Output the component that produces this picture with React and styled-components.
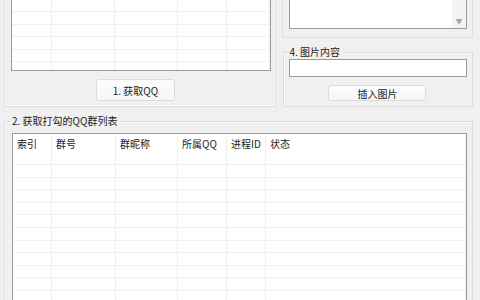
import React from "react";
import styled, { createGlobalStyle } from "styled-components";

const Global = createGlobalStyle`
  html, body { margin: 0; padding: 0; background: #f0f0f0; }
  body {
    font-family: "Noto Sans CJK SC", "Liberation Sans", sans-serif;
    font-size: 10px;
    color: #1a1a1a;
  }
  * { box-sizing: border-box; }
`;

const Window = styled.div`
  width: 480px;
  height: 300px;
  overflow: hidden;
  padding: 0 7px 0 4px;
  display: flex;
  flex-direction: column;
`;

const TopRow = styled.div`
  display: flex;
  gap: 6px;
  height: 107px;
  flex: none;
`;

const LeftGroup = styled.div`
  width: 273px;
  border: 1px solid #dedede;
  border-top: none;
  box-shadow: inset 1px 0 0 #fafafa, inset -1px -1px 0 #fafafa;
  padding: 0 4px 0 6px;
  display: flex;
  flex-direction: column;
`;

const ListBox = styled.div`
  background: #fff;
  border: 1px solid #9a9a9a;
  border-top: ${(p) => (p.$noTop ? "none" : "1px solid #9a9a9a")};
  box-shadow: inset -1px 0 0 #e6e6e6;
  height: ${(p) => p.$h};
  overflow: hidden;
  flex: none;
`;

const GridRow = styled.div`
  display: grid;
  grid-template-columns: ${(p) => p.$cols};
  height: ${(p) => p.$h};
  border-bottom: 1px solid #f1f1f1;
`;

const Cell = styled.div`
  border-right: 1px solid #efefef;
  padding: ${(p) => (p.$head ? "3px 0 0 4px" : "0")};
  white-space: nowrap;
  line-height: 14px;
  color: #222;
`;

const Button = styled.button`
  font-family: "Noto Sans CJK SC", "Liberation Sans", sans-serif;
  font-size: 10px;
  color: #1a1a1a;
  width: ${(p) => p.$w};
  height: ${(p) => p.$h};
  margin-top: ${(p) => p.$mt};
  margin-left: ${(p) => p.$ml};
  align-self: flex-start;
  background: linear-gradient(#fdfdfd, #f6f6f6);
  border: 1px solid #dcdcdc;
  border-radius: 3px;
  padding: 0;
  flex: none;
`;

const RightCol = styled.div`
  width: 191px;
  display: flex;
  flex-direction: column;
`;

const TopRightGroup = styled.div`
  height: 38px;
  border: 1px solid #dedede;
  border-top: none;
  padding: 0 5px 0 6px;
  flex: none;
`;

const TextArea = styled.div`
  height: 29px;
  background: #fff;
  border: 1px solid #9a9a9a;
  border-top: none;
  display: flex;
  justify-content: flex-end;
`;

const ScrollTrack = styled.div`
  width: 14px;
  background: #f4f4f4;
  display: flex;
  align-items: flex-end;
  justify-content: center;
  padding-bottom: 3px;
  color: #a8a8a8;
  font-size: 7px;
  line-height: 7px;
`;

const Fieldset = styled.fieldset`
  margin: ${(p) => p.$m};
  padding: ${(p) => p.$p};
  border: 1px solid #dedede;
  box-shadow: inset 1px 1px 0 #fafafa;
  min-width: 0;
  display: flex;
  flex-direction: column;
  flex: ${(p) => (p.$grow ? "1" : "none")};
  height: ${(p) => p.$h || "auto"};
`;

const Legend = styled.legend`
  padding: 0 3px 0 0;
  font-size: 10px;
  line-height: 14px;
  color: #1a1a1a;
`;

const Input = styled.div`
  height: 18px;
  background: #fff;
  border: 1px solid #9a9a9a;
  flex: none;
`;

const topCols = "40px 63px 63px 49px 1fr";
const bottomCols = "39px 64px 62px 49px 39px 1fr";

const topRows = ["12px", "12.5px", "12.5px", "12.5px", "12.5px", "12.5px"];
const headers = ["索引", "群号", "群昵称", "所属QQ", "进程ID", "状态"];

export default function App() {
  return (
    <>
      <Global />
      <Window>
        <TopRow>
          <LeftGroup>
            <ListBox $noTop $h="71px">
              {topRows.map((h, i) => (
                <GridRow key={i} $cols={topCols} $h={h}>
                  {[0, 1, 2, 3, 4].map((c) => (
                    <Cell key={c} />
                  ))}
                </GridRow>
              ))}
            </ListBox>
            <Button $w="79px" $h="22px" $mt="8px" $ml="85px">
              1. 获取QQ
            </Button>
          </LeftGroup>
          <RightCol>
            <TopRightGroup>
              <TextArea>
                <ScrollTrack>▼</ScrollTrack>
              </TextArea>
            </TopRightGroup>
            <Fieldset $m="7px 0 0 1px" $p="0 5px 0 5px" $h="62px">
              <Legend>4. 图片内容</Legend>
              <Input />
              <Button $w="98px" $h="16px" $mt="8px" $ml="39px">
                插入图片
              </Button>
            </Fieldset>
          </RightCol>
        </TopRow>
        <Fieldset $m="7px 0 0 0" $p="5px 5px 0 7px" $grow>
          <Legend>2. 获取打勾的QQ群列表</Legend>
          <ListBox $h="200px">
            <GridRow $cols={bottomCols} $h="31px">
              {headers.map((t) => (
                <Cell key={t} $head>
                  {t}
                </Cell>
              ))}
            </GridRow>
            {Array.from({ length: 12 }).map((_, i) => (
              <GridRow key={i} $cols={bottomCols} $h="12.6px">
                {headers.map((t) => (
                  <Cell key={t} />
                ))}
              </GridRow>
            ))}
          </ListBox>
        </Fieldset>
      </Window>
    </>
  );
}
